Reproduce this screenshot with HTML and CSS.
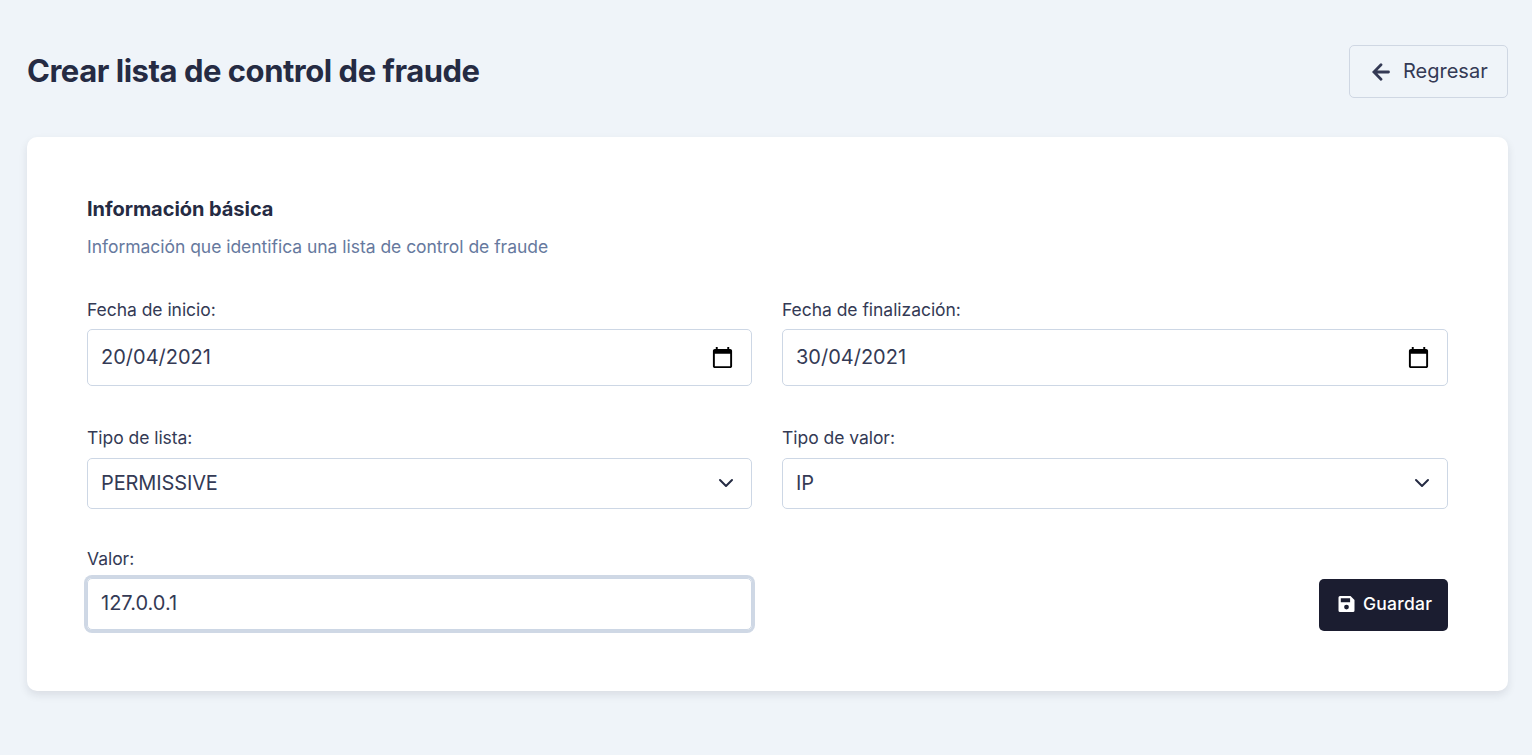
FILE: index.html
```html
<!DOCTYPE html>
<html lang="es">
<head>
<meta charset="utf-8">
<title>Crear lista de control de fraude</title>
<link rel="stylesheet" href="styles.css">
</head>
<body>
<main class="page">
  <header class="page-header">
    <h1 class="title">Crear lista de control de fraude</h1>
    <button class="btn btn-back" type="button">
      <svg class="icon-back" viewBox="0 0 18 18"><path d="M9 1.800 1.900 9 9 16.200M2.200 9H16.500"/></svg>
      <span>Regresar</span>
    </button>
  </header>
  <section class="card">
    <h2 class="subtitle">Información básica</h2>
    <p class="hint">Información que identifica una lista de control de fraude</p>
    <div class="form">
      <div class="group">
        <div class="label label-date">Fecha de inicio:</div>
        <div class="field field-date"><span>20/04/2021</span>
          <svg class="icon-date" viewBox="0 0 24 24"><path d="M20 3h-1V1h-2v2H7V1H5v2H4c-1.100 0-2 .9-2 2v16c0 1.100.9 2 2 2h16c1.100 0 2-.9 2-2V5c0-1.100-.9-2-2-2zm0 18H4V8h16v13z"/></svg>
        </div>
      </div>
      <div class="group">
        <div class="label label-date">Fecha de finalización:</div>
        <div class="field field-date"><span>30/04/2021</span>
          <svg class="icon-date" viewBox="0 0 24 24"><path d="M20 3h-1V1h-2v2H7V1H5v2H4c-1.100 0-2 .9-2 2v16c0 1.100.9 2 2 2h16c1.100 0 2-.9 2-2V5c0-1.100-.9-2-2-2zm0 18H4V8h16v13z"/></svg>
        </div>
      </div>
      <div class="group">
        <div class="label">Tipo de lista:</div>
        <div class="field field-select"><span>PERMISSIVE</span>
          <svg class="icon-chevron" viewBox="0 0 16 16"><path d="m2 5 6 6 6-6"/></svg>
        </div>
      </div>
      <div class="group">
        <div class="label">Tipo de valor:</div>
        <div class="field field-select"><span>IP</span>
          <svg class="icon-chevron" viewBox="0 0 16 16"><path d="m2 5 6 6 6-6"/></svg>
        </div>
      </div>
      <div class="group">
        <div class="label label-value">Valor:</div>
        <div class="field field-focus"><span>127.0.0.1</span></div>
      </div>
      <div class="actions">
        <button class="btn btn-save" type="button">
          <svg class="icon-save" viewBox="0 0 16 16"><path fill-rule="evenodd" d="M1.500 0H12l4 4v10.500a1.500 1.500 0 0 1-1.500 1.500h-13A1.500 1.500 0 0 1 0 14.500v-13A1.500 1.500 0 0 1 1.500 0zM2.300 2.300v4h9.300v-4zM8 8.700a2.400 2.400 0 1 0 0 4.800 2.400 2.400 0 0 0 0-4.800z"/></svg>
          <span>Guardar</span>
        </button>
      </div>
    </div>
  </section>
</main>
</body>
</html>
```
FILE: styles.css
```css
* { box-sizing: border-box; }
body {
  margin: 0;
  background: #eff4f9;
  color: #343a55;
  font-family: Inter, "Liberation Sans", sans-serif;
}
.page { padding: 45px 24px 64px 27px; }
.page-header {
  display: flex;
  justify-content: space-between;
  height: 53px;
  margin-bottom: 39px;
}
.title {
  margin: 0;
  color: #252b43;
  font-size: 31px;
  line-height: 52px;
  font-weight: 700;
  letter-spacing: -0.47px;
}
.btn {
  display: flex;
  align-items: center;
  font-family: inherit;
  border-radius: 5px;
}
.btn-back {
  width: 159px;
  gap: 13px;
  padding: 0 0 2px 22px;
  border: 1px solid #cfd7e3;
  background: transparent;
  color: #343a55;
  font-size: 20px;
}
.icon-back {
  width: 18px;
  height: 18px;
  margin-top: 2px;
  fill: none;
  stroke: #343a55;
  stroke-width: 2.8;
  stroke-linecap: round;
}
.card {
  height: 554px;
  padding: 60px 60px 0;
  border-radius: 10px;
  background: #fff;
  box-shadow: 0 4px 8px rgba(27, 29, 48, .1);
}
.subtitle {
  margin: 0;
  color: #252b43;
  font-size: 20px;
  line-height: 24px;
  font-weight: 700;
  letter-spacing: -0.05px;
}
.hint {
  margin: 14px 0 38px;
  color: #66799e;
  font-size: 17.5px;
  line-height: 24px;
  letter-spacing: -0.03px;
}
.form {
  display: grid;
  grid-template-columns: 665px 666px;
  grid-template-rows: 89px 83px 82px;
  row-gap: 40px;
  column-gap: 30px;
}
.label {
  margin-bottom: 8px;
  font-size: 17.5px;
  line-height: 24px;
  letter-spacing: -0.04px;
}
.label-date { padding-top: 1px; margin-bottom: 7px; }
.label-value { margin-top: -2px; margin-bottom: 7px; }
.field {
  display: flex;
  align-items: center;
  justify-content: space-between;
  height: 51px;
  padding: 0 17px 2px 13px;
  border: 1px solid #cdd7e5;
  border-radius: 5px;
  font-size: 20px;
}
.field-date { height: 57px; }
.field-select { letter-spacing: -0.12px; }
.field-focus { height: 52px; padding-bottom: 3px; box-shadow: 0 0 0 3px #cfd8e5; }
.icon-date { width: 23px; height: 23px; margin-top: 1px; }
.icon-chevron {
  width: 16px;
  height: 16px;
  margin-top: 1px;
  fill: none;
  stroke: #252b43;
  stroke-width: 2;
  stroke-linecap: round;
  stroke-linejoin: round;
}
.actions { display: flex; justify-content: flex-end; align-items: flex-end; }
.btn-save {
  width: 129px;
  height: 52px;
  gap: 8px;
  padding: 0 0 3px 19px;
  border: 0;
  background: #1b1d30;
  color: #fff;
  font-size: 17.5px;
  font-weight: 500;
  letter-spacing: 0.25px;
}
.icon-save { width: 17px; height: 16px; fill: #fff; }
```
